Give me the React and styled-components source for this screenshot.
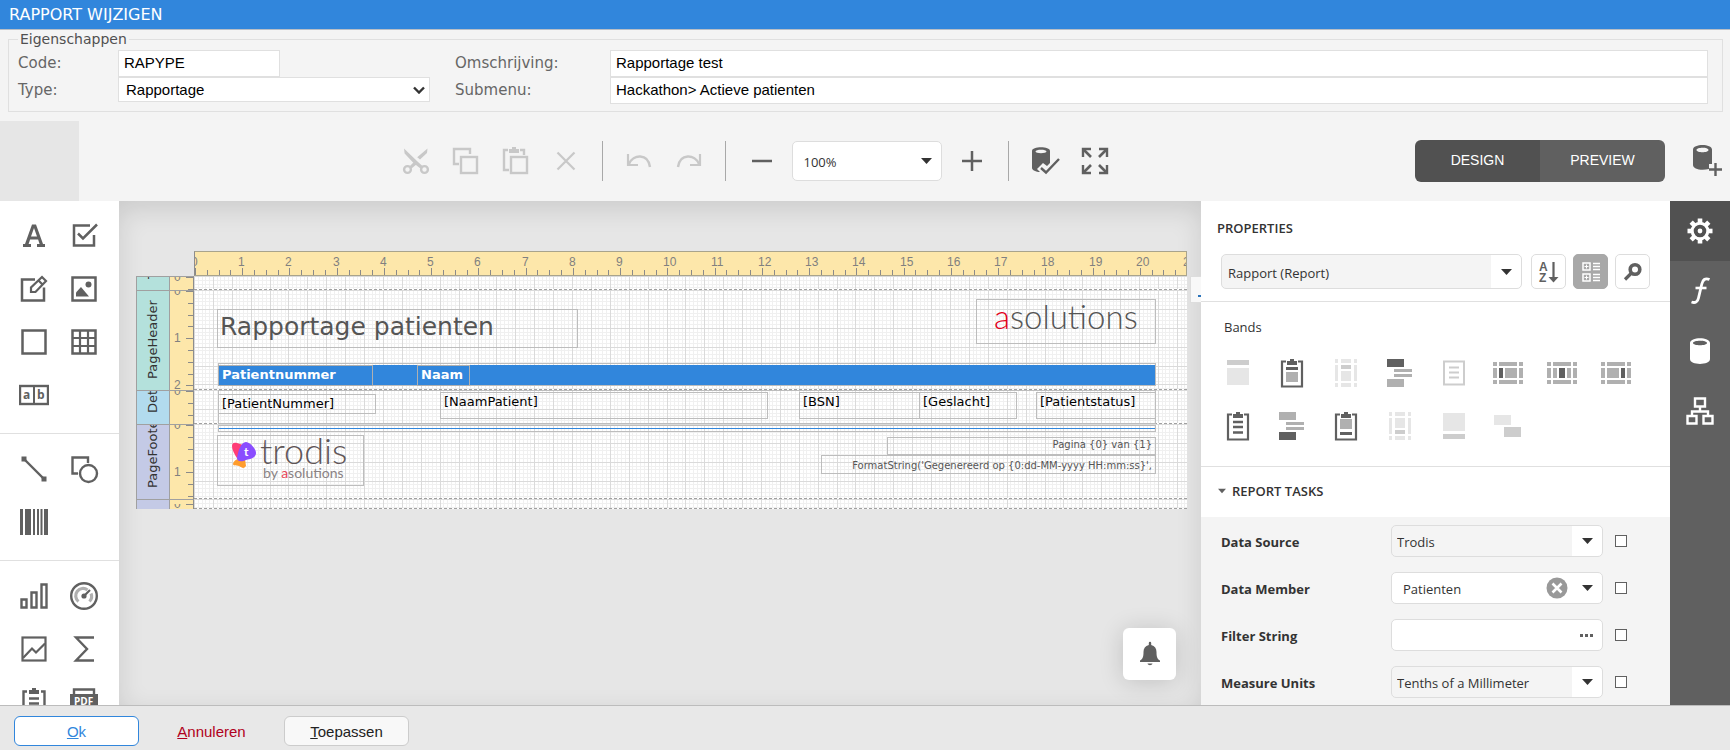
import React from 'react';
import styled, { createGlobalStyle } from 'styled-components';

const CM = 47.24;
const GRID = 18.9;

const UI_FONT = '"Segoe UI", "Open Sans", "Noto Sans", sans-serif';
const VERDANA = 'Verdana, "DejaVu Sans", sans-serif';
const ARIAL = 'Arial, "Liberation Sans", sans-serif';

const DARK = '#606060';
const MID = '#b0b0b0';
const SOFT = '#cdcdcd';
const FAINT = '#e6e6e6';

const GlobalStyle = createGlobalStyle`
  *, *::before, *::after {
    box-sizing: border-box;
  }
  body {
    margin: 0;
    background: #f4f4f4;
    font-family: ${ARIAL};
    color: #333;
  }
  button, input, select {
    margin: 0;
    font: inherit;
    color: inherit;
  }
`;

/* ---------- icons ---------- */

const Svg = ({ w = 30, h = w, children, ...rest }) => (
  <svg width={w} height={h} viewBox={`0 0 ${w} ${h}`} fill="none" aria-hidden="true" {...rest}>
    {children}
  </svg>
);

const Line = ({ d, w = 2, ...rest }) => <path d={d} stroke="currentColor" strokeWidth={w} {...rest} />;
const Fill = ({ d, ...rest }) => <path d={d} fill="currentColor" {...rest} />;

const CaretIcon = () => (
  <Svg w={11} h={6}>
    <Fill d="M0 0h11L5.5 6z" />
  </Svg>
);

const ChevronIcon = () => (
  <Svg w={12} h={8}>
    <Line d="M1 1.5l5 5 5-5" w={2.4} />
  </Svg>
);

const CutIcon = () => (
  <Svg>
    <circle cx="6.5" cy="23.5" r="3.4" stroke="currentColor" strokeWidth="2.4" />
    <circle cx="23.5" cy="23.5" r="3.4" stroke="currentColor" strokeWidth="2.4" />
    <Fill d="M3 2.5L16.5 15.5L22 20.5L19.5 22.5L13 17.5L3.6 7.5Z" />
    <Fill d="M26.5 2.5L26 7L19 13.5L16.2 11.2ZM13.5 15.5L16 18L10.5 22.6L8.4 20.6Z" />
  </Svg>
);

const CopyIcon = () => (
  <Svg>
    <Line d="M19 8V3H3v15h5" w={2.4} />
    <rect x="10" y="11" width="16" height="16" stroke="currentColor" strokeWidth="2.4" />
  </Svg>
);

const PasteIcon = () => (
  <Svg>
    <Line d="M7 4H3v20h5M19 4h4v5" w={2.4} />
    <Fill d="M8 3h3V1h4v2h3v4H8z" />
    <rect x="10" y="11" width="16" height="16" stroke="currentColor" strokeWidth="2.4" />
  </Svg>
);

const DeleteIcon = () => (
  <Svg>
    <Line d="M6.5 6.5l17 17M23.5 6.5l-17 17" w={2.2} />
  </Svg>
);

const UndoIcon = () => (
  <Svg>
    <Line d="M4 8v11h10" w={2.2} />
    <Line d="M5 18C9 8 24 7 26 21" w={2.4} />
  </Svg>
);

const RedoIcon = () => (
  <Svg>
    <Line d="M26 8v11H16" w={2.2} />
    <Line d="M25 18C21 8 6 7 4 21" w={2.4} />
  </Svg>
);

const MinusIcon = () => (
  <Svg>
    <Line d="M5 15h20" w={2.5} />
  </Svg>
);

const PlusIcon = () => (
  <Svg>
    <Line d="M5 15h20M15 5v20" w={2.5} />
  </Svg>
);

const ValidateIcon = () => (
  <Svg>
    <Fill
      fillRule="evenodd"
      d="M2 5c0-5 18-5 18 0v12l-3 3-4-3-6 6 3 3C6 26 2 24 2 22zM5.5 5.5c0 2.3 11 2.3 11 0s-11-2.3-11 0z"
    />
    <Line d="M11 22l5 4.5L29 13" w={2.4} />
  </Svg>
);

const FullscreenIcon = () => (
  <Svg>
    <Line d="M3 11V3h8M19 3h8v8M27 19v8h-8M11 27H3v-8" w={2.4} />
    <Line d="M3 3l8 8M27 3l-8 8M27 27l-8-8M3 27l8-8" w={2.6} />
  </Svg>
);

const DataAddIcon = () => (
  <Svg w={30} h={34}>
    <Fill
      fillRule="evenodd"
      d="M1 5.5c0-6 19-6 19 0V20h-3v5C9 27 1 25 1 21zM4.5 6c0 3 12 3 12 0s-12-3-12 0z"
    />
    <Line d="M17 25.5h13M23.5 19v13" w={2.4} />
  </Svg>
);

const LabelIcon = () => (
  <Svg>
    <Fill
      fillRule="evenodd"
      d="M13 3.5h4L24 23h2v3h-8v-3h2.6l-1.5-4.5h-8L9.6 23H12v3H4v-3h2zM12 15.5h6L15 7z"
    />
  </Svg>
);

const CheckBoxIcon = () => (
  <Svg>
    <Line d="M21 4.5H5v20h20V14" w={2.5} />
    <Line d="M9 12.5l5 5L28 3.5" w={2.5} />
  </Svg>
);

const RichTextIcon = () => (
  <Svg>
    <Line d="M16 5.5H3v21h22v-13" w={2.5} />
    <Line d="M12 18v-4.5L23 3l4 4-10.5 11zM19.5 6.5l4 4" w={2.2} />
  </Svg>
);

const PictureIcon = () => (
  <Svg>
    <rect x="3.5" y="3.5" width="23" height="23" stroke="currentColor" strokeWidth="2.5" />
    <circle cx="19.5" cy="10.5" r="3" fill="currentColor" />
    <Fill d="M7 22.5v-4L12 13l8 9.5z" />
  </Svg>
);

const PanelIcon = () => (
  <Svg>
    <rect x="3.5" y="3.5" width="23" height="23" stroke="currentColor" strokeWidth="2.5" />
  </Svg>
);

const TableIcon = () => (
  <Svg>
    <rect x="3.5" y="3.5" width="23" height="23" stroke="currentColor" strokeWidth="2.5" />
    <Line d="M11 3v24M19 3v24M3 11h24M3 19h24" w={2.2} />
  </Svg>
);

const CombIcon = () => (
  <Svg>
    <rect x="1" y="6" width="28" height="18" stroke="currentColor" strokeWidth="2.4" />
    <Line d="M15 6v18" w={2} />
    <text x="4" y="19" fontSize="12" fontWeight="700" fontFamily="Open Sans" fill="currentColor">a</text>
    <text x="18" y="19" fontSize="12" fontWeight="700" fontFamily="Open Sans" fill="currentColor">b</text>
  </Svg>
);

const LineIcon = () => (
  <Svg>
    <Line d="M5 5l20 20" w={2.4} />
    <Fill d="M2.5 2.5h5v5h-5zM22.5 22.5h5v5h-5z" />
  </Svg>
);

const ShapeIcon = () => (
  <Svg>
    <Line d="M19 9V3.5H3.5v16H9" w={2.4} />
    <circle cx="19.5" cy="19.5" r="8.5" stroke="currentColor" strokeWidth="2.4" />
  </Svg>
);

const BarcodeIcon = () => (
  <Svg>
    <Fill d="M1 2h3v26H1zM6 2h6v26H6zM14 2h2v26h-2zM18 2h2v26h-2zM21.5 2h2v26h-2zM25 2h4v26h-4z" />
  </Svg>
);

const ChartIcon = () => (
  <Svg>
    <Line d="M2.5 18.5h5v8h-5zM12.5 11.5h5v15h-5zM22.5 3.5h5v23h-5z" w={2.4} />
  </Svg>
);

const GaugeIcon = () => (
  <Svg>
    <circle cx="15" cy="15" r="12.8" stroke="currentColor" strokeWidth="2.4" />
    <path d="M9.5 20.5a7.3 7.3 0 0 1 9-11.5M22 12.5a7.3 7.3 0 0 1-1.5 8" stroke={MID} strokeWidth="3.2" />
    <Line d="M15 15l6-6" w={2.2} />
    <circle cx="15" cy="15" r="2.6" fill="currentColor" />
  </Svg>
);

const SparklineIcon = () => (
  <Svg>
    <rect x="3.5" y="3.5" width="23" height="23" stroke="currentColor" strokeWidth="2.2" />
    <Line d="M4 24l9-9.5 4 4 9-9" w={2.2} />
  </Svg>
);

const SigmaIcon = () => (
  <Svg>
    <Line d="M25 3.5H7l11 11.5L7 26.5h18" w={2.4} />
  </Svg>
);

const ContentsIcon = () => (
  <Svg>
    <Line d="M8 4.5H4.5v23h21v-23H22M10 11.5h10M10 16.5h10M10 21.5h10" w={2.4} />
    <Fill d="M10 3h3V1h4v2h3v4H10z" />
  </Svg>
);

const PdfIcon = () => (
  <Svg>
    <Line d="M5 8V2.5h20V8" w={2.4} />
    <Fill d="M1 7h28v16H1z" />
    <text x="5" y="18" fontSize="10" fontWeight="700" fontFamily="Open Sans" fill="#fff">PDF</text>
  </Svg>
);

const SortIcon = () => (
  <Svg w={24}>
    <text x="2" y="11" fontSize="12" fontWeight="700" fontFamily="Liberation Sans" fill="currentColor">A</text>
    <text x="2" y="22" fontSize="12" fontWeight="700" fontFamily="Liberation Sans" fill="currentColor">Z</text>
    <Line d="M16.5 2v17" w={2.2} />
    <Fill d="M11.5 17h10l-5 5.5z" />
  </Svg>
);

const CategoryIcon = () => (
  <Svg w={24}>
    <Line d="M4 3h7v7H4zM4 14h7v7H4zM14 3.5h7M14 6.5h7M14 9.5h7M14 14.5h7M14 17.5h7M14 20.5h7" w={1.5} />
    <Line d="M7.5 4.5v4M5.5 6.5h4M7.5 15.5v4M5.5 17.5h4" w={1} />
  </Svg>
);

const SearchIcon = () => (
  <Svg w={24}>
    <circle cx="14" cy="9.5" r="4.8" stroke="currentColor" strokeWidth="3.6" />
    <Line d="M10.5 13L4 19.5" w={3.2} />
  </Svg>
);

const GearIcon = () => (
  <Svg w={28}>
    {[0, 45, 90, 135, 180, 225, 270, 315].map((a) => (
      <rect key={a} x="11.7" y="1.5" width="4.6" height="5" fill="currentColor" transform={`rotate(${a} 14 14)`} />
    ))}
    <circle cx="14" cy="14" r="7.8" stroke="currentColor" strokeWidth="3" />
    <circle cx="14" cy="14" r="2.4" fill="currentColor" />
  </Svg>
);

const FunctionIcon = () => (
  <Svg w={28}>
    <Line d="M23.5 2.5C19 .5 16.7 3 15.8 7l-3.3 14C11.8 24.5 9.5 26.5 5.5 25" w={2.8} />
    <Line d="M9.5 11h11" w={2.6} />
  </Svg>
);

const DatabaseIcon = () => (
  <Svg w={28}>
    <Fill fillRule="evenodd" d="M4 6c0-6.5 20-6.5 20 0v16c0 6.5-20 6.5-20 0zM7 6c0 3 14 3 14 0s-14-3-14 0z" />
  </Svg>
);

const TreeIcon = () => (
  <Svg w={28}>
    <Line d="M9 1.5h10v8H9zM1.5 19h9v7.5h-9zM17.5 19h9v7.5h-9zM14 10v4M6 19v-4.5h16V19" w={2.4} />
  </Svg>
);

const BellIcon = () => (
  <Svg w={22} h={26}>
    <Fill d="M9.8 4V2a1.2 1.2 0 0 1 2.4 0v2c3.6.8 5.3 3.5 5.3 7 0 5 .8 7 3.5 8.5V21H1v-1.5C3.7 18 4.5 16 4.5 11c0-3.5 1.7-6.2 5.3-7zM8.5 22.5h5c-.5 2.2-4.5 2.2-5 0z" />
  </Svg>
);

const ClearIcon = () => (
  <Svg w={22}>
    <circle cx="11" cy="11" r="10.5" fill="#999" />
    <path d="M6.5 6.5l9 9M15.5 6.5l-9 9" stroke="#fff" strokeWidth="2.6" />
  </Svg>
);

const DotsIcon = () => (
  <Svg w={14} h={4}>
    <Fill d="M0 1h3v3H0zM5 1h3v3H5zM10 1h3v3h-3z" />
  </Svg>
);

const Clipboard = ({ children }) => (
  <Svg>
    <path d="M9 3.5H5v25h20v-25h-4" stroke={DARK} strokeWidth="2.2" />
    <path d="M10 3h3V1h4v2h3v4H10z" fill={DARK} />
    {children}
  </Svg>
);

const Frame = ({ children }) => (
  <Svg>
    <path
      d="M4 1h3v4H4zM10 1h10v4H10zM23 1h3v4h-3zM4 7h3v16H4zM23 7h3v16h-3zM4 25h3v4H4zM10 25h10v4H10zM23 25h3v4h-3z"
      fill={FAINT}
    />
    {children}
  </Svg>
);

const WideFrame = ({ children }) => (
  <Svg>
    <path
      d="M0 4h4v4H0zM6 4h18v4H6zM26 4h4v4h-4zM0 10h4v10H0zM26 10h4v10h-4zM0 22h4v4H0zM6 22h18v4H6zM26 22h4v4h-4z"
      fill={MID}
    />
    {children}
  </Svg>
);

const BAND_ICONS = [
  {
    name: 'Top Margin',
    icon: (
      <Svg>
        <path d="M4 2h22v5H4z" fill={SOFT} />
        <path d="M4 10h22v17H4z" fill={FAINT} />
      </Svg>
    ),
  },
  {
    name: 'Report Header',
    icon: (
      <Clipboard>
        <path d="M9 9h12v3H9z" fill={DARK} />
        <path d="M9 14h12v10H9z" fill={MID} />
      </Clipboard>
    ),
  },
  {
    name: 'Page Header',
    icon: (
      <Frame>
        <path d="M10 7h10v4H10z" fill={SOFT} />
        <path d="M10 13h10v10H10z" fill={FAINT} />
      </Frame>
    ),
  },
  {
    name: 'Group Header',
    icon: (
      <Svg>
        <path d="M2 1h17v8H2z" fill={DARK} />
        <path d="M9 11h18v3H9zM9 16h18v3H9zM2 21h17v8H2z" fill={MID} />
      </Svg>
    ),
  },
  {
    name: 'Detail',
    icon: (
      <Svg>
        <path d="M5 3.5h20v23H5z" stroke={SOFT} strokeWidth="2" />
        <path d="M10 9.5h10M10 14.5h10M10 19.5h10" stroke={SOFT} strokeWidth="2" />
      </Svg>
    ),
  },
  {
    name: 'Vertical Header',
    icon: (
      <WideFrame>
        <path d="M6 10h4v10H6z" fill={DARK} />
        <path d="M12 10h12v10H12z" fill={MID} />
      </WideFrame>
    ),
  },
  {
    name: 'Vertical Detail',
    icon: (
      <WideFrame>
        <path d="M12 10h6v10h-6z" fill={DARK} />
        <path d="M6 10h4v10H6zM20 10h4v10h-4z" fill={MID} />
      </WideFrame>
    ),
  },
  {
    name: 'Vertical Total',
    icon: (
      <WideFrame>
        <path d="M20 10h4v10h-4z" fill={DARK} />
        <path d="M6 10h12v10H6z" fill={MID} />
      </WideFrame>
    ),
  },
  {
    name: 'Detail Report',
    icon: (
      <Clipboard>
        <path d="M10 11h10M10 16h10M10 21.5h10" stroke={DARK} strokeWidth="2.5" />
      </Clipboard>
    ),
  },
  {
    name: 'Group Footer',
    icon: (
      <Svg>
        <path d="M2 1h17v8H2zM9 11h18v3H9zM9 16h18v3H9z" fill={MID} />
        <path d="M2 21h17v8H2z" fill={DARK} />
      </Svg>
    ),
  },
  {
    name: 'Report Footer',
    icon: (
      <Clipboard>
        <path d="M9 8h12v10H9z" fill={MID} />
        <path d="M9 21h12v3H9z" fill={DARK} />
      </Clipboard>
    ),
  },
  {
    name: 'Page Footer',
    icon: (
      <Frame>
        <path d="M10 7h10v10H10z" fill={FAINT} />
        <path d="M10 19h10v4H10z" fill={SOFT} />
      </Frame>
    ),
  },
  {
    name: 'Bottom Margin',
    icon: (
      <Svg>
        <path d="M4 2h22v18H4z" fill={FAINT} />
        <path d="M4 23h22v5H4z" fill={SOFT} />
      </Svg>
    ),
  },
  {
    name: 'Sub-Band',
    icon: (
      <Svg>
        <path d="M1 4h17v10H1z" fill={FAINT} />
        <path d="M11 16h17v10H11z" fill={SOFT} />
      </Svg>
    ),
  },
];

const TOOL_GROUPS = [
  [
    ['Label', LabelIcon],
    ['Check Box', CheckBoxIcon],
    ['Rich Text', RichTextIcon],
    ['Picture Box', PictureIcon],
    ['Panel', PanelIcon],
    ['Table', TableIcon],
    ['Character Comb', CombIcon],
  ],
  [
    ['Line', LineIcon],
    ['Shape', ShapeIcon],
    ['Barcode', BarcodeIcon],
  ],
  [
    ['Chart', ChartIcon],
    ['Gauge', GaugeIcon],
    ['Sparkline', SparklineIcon],
    ['Pivot Grid', SigmaIcon],
    ['Table of Contents', ContentsIcon],
    ['PDF Content', PdfIcon],
  ],
];

/* ---------- page ---------- */

const Page = styled.div`
  display: flex;
  flex-direction: column;
  height: 100vh;
  overflow: hidden;
`;

const TitleBar = styled.h1`
  margin: 0;
  padding: 0 9px;
  border-bottom: 1px solid #b8bec6;
  background: #3186dc;
  color: #fff;
  font: 400 16px/29px ${VERDANA};
`;

const Properties = styled.fieldset`
  display: grid;
  grid-template-columns: 100px 312px 180px 1fr;
  margin: 0 7px 9px 8px;
  padding: 2px 14px 7px 9px;
  border: 1px solid #e0e0e0;
  color: #666;
  font: 15px/26px ${VERDANA};
`;

const Legend = styled.legend`
  padding: 0 2px;
  color: #505050;
  font-size: 14px;
  line-height: 18px;
`;

const FieldLabel = styled.label`
  padding-left: ${(props) => (props.$indent ? '25px' : '0')};
  width: max-content;
`;

const TextField = styled.input`
  width: ${(props) => (props.$short ? '162px' : '100%')};
  height: 27px;
  padding: 0 5px 2px;
  border: 1px solid #e0e0e0;
  background: #fff;
  color: #000;
  font: 15px ${ARIAL};
`;

const SelectWrap = styled.div`
  position: relative;
  display: flex;
  align-items: center;
  height: ${(props) => props.$height || 32}px;
  color: #333;

  > svg {
    position: absolute;
    right: ${(props) => props.$caret || 10}px;
    pointer-events: none;
  }
`;

const TypeSelect = styled.select`
  width: 100%;
  height: 100%;
  padding: 0 7px;
  border: 1px solid #e0e0e0;
  background: #fff;
  color: #000;
  font: 15px ${ARIAL};
  appearance: none;
`;

/* ---------- toolbar ---------- */

const Toolbar = styled.div`
  display: flex;
  align-items: center;
  height: 80px;
  background: #f4f4f4;
`;

const MenuCorner = styled.div`
  width: 79px;
  height: 100%;
  background: #e6e6e6;
`;

const ToolStrip = styled.div`
  flex: 1;
  display: flex;
  align-items: center;
  justify-content: center;
  padding-left: 16px;
`;

const ToolButton = styled.button`
  display: grid;
  place-items: center;
  width: 50px;
  height: 50px;
  padding: 0;
  border: 0;
  background: none;
  color: ${DARK};

  &:disabled {
    color: #c8c8c8;
  }
`;

const Divider = styled.span`
  width: 1px;
  height: 40px;
  margin: 0 11px;
  background: #a8a8a8;
`;

const Modes = styled.div`
  display: flex;
  height: 42px;
  border-radius: 6px;
  overflow: hidden;
  margin-right: 27px;
`;

const ModeButton = styled.button`
  width: 125px;
  padding: 0 0 2px;
  border: 0;
  background: ${(props) => (props.$active ? '#515151' : DARK)};
  color: #fff;
  font: 14px ${ARIAL};
`;

const AddData = styled.button`
  display: grid;
  padding: 0;
  margin-right: 8px;
  border: 0;
  background: none;
  color: ${DARK};
`;

const Combo = styled.select`
  width: 100%;
  height: 100%;
  padding: 2px 30px 0 5px;
  border: 1px solid #ddd;
  border-radius: 5px;
  background: ${(props) =>
    props.$plain
      ? '#fff'
      : 'linear-gradient(#f4f4f4, #f4f4f4) no-repeat left / calc(100% - 30px) 100%, #fff'};
  color: #333;
  font: 13px ${UI_FONT};
  text-indent: ${(props) => props.$indent || 0}px;
  appearance: none;
`;

const ZoomBox = styled(SelectWrap)`
  width: 150px;
  margin: 0 5px;
`;

/* ---------- designer ---------- */

const Designer = styled.div`
  flex: 1;
  display: flex;
  min-height: 0;
`;

const Toolbox = styled.nav`
  width: 119px;
  overflow: hidden;
  background: #fff;
`;

const ToolGroup = styled.div`
  display: grid;
  grid-template-columns: 50px 50px;
  grid-auto-rows: 53px;
  padding: 8px 9px 12px;
  border-bottom: 1px solid #e0e0e0;

  ${ToolButton} {
    height: 53px;
  }
`;

const Surface = styled.main`
  position: relative;
  flex: 1;
  min-width: 0;
  overflow: hidden;
  padding: 50px 14px 0 17px;
  background: #e6e6e6;
  box-shadow: inset 0 8px 26px rgba(0, 0, 0, 0.12);
`;

const RulerRow = styled.div`
  margin-left: 58px;
  height: 25px;
  border: 1px solid #a9a48c;
  border-left-color: #8d8d8d;
  background: #fde7aa;
`;

const BandRow = styled.section`
  display: grid;
  grid-template-columns: 33px 25px 1fr;
  grid-template-rows: 100%;
  height: ${(props) => props.$height}px;
`;

const BandLabel = styled.div`
  min-height: 0;
  overflow: hidden;
  border-right: 1px solid #a0a0a0;
  border-bottom: 1px solid #a0a0a0;
  background: ${(props) => props.$color};
  color: #333;
  font: 13px/32px ${VERDANA};
  text-indent: 11px;
  writing-mode: vertical-rl;
  transform: rotate(180deg);
  white-space: nowrap;
`;

const BandRuler = styled.div`
  min-height: 0;
  border-top: 1px solid #a0a0a0;
  border-left: 1px solid #a0a0a0;
  border-right: 1px solid #8d8d8d;
  background: #fde7aa;
  overflow: hidden;
`;

const BandArea = styled.div`
  position: relative;
  min-height: 0;
  background: #fff;
  border-bottom: 1px dashed #a0a0a0;
`;

const GridSvg = styled.svg`
  display: block;
  width: 100%;
  height: 100%;
  shape-rendering: crispEdges;
`;

const ReportItem = styled.div`
  position: absolute;
  left: ${(props) => props.$x}px;
  top: ${(props) => props.$y}px;
  width: ${(props) => props.$w}px;
  height: ${(props) => props.$h}px;
  padding: 0 3px;
  border: 1px solid #bdbdbd;
  color: #000;
  font: 13px/18px ${VERDANA};
  white-space: nowrap;
`;

const ReportTitle = styled(ReportItem)`
  padding: 0 2px;
  color: #555;
  font-size: 25px;
  line-height: 34px;
`;

const HeaderBar = styled(ReportItem)`
  padding: 0;
  background: linear-gradient(#3186dc, #3186dc) no-repeat 0 1px;
`;

const HeaderCell = styled(ReportItem)`
  border-color: #b0b0b0;
  background: #3186dc;
  color: #fff;
  font-weight: 700;
`;

const SmallText = styled(ReportItem)`
  color: #555;
  font-size: 10px;
  line-height: ${(props) => props.$lh || 14}px;
  text-align: right;
`;

const LineItem = styled(ReportItem)`
  display: flex;
  align-items: center;
  padding: 0;

  &::before {
    content: '';
    flex: 1;
    height: 1px;
    background: #3186dc;
  }
`;

const SmartTag = styled.button`
  position: absolute;
  right: -6px;
  top: 75px;
  width: 17px;
  height: 27px;
  padding: 0 0 5px 7px;
  border: 1px solid #ddd;
  background: #f8f8f8;
  color: #2a73bb;
  display: flex;
  align-items: flex-end;
`;

const BellButton = styled.button`
  position: absolute;
  right: 25px;
  bottom: 25px;
  display: grid;
  place-items: center;
  width: 53px;
  height: 52px;
  padding: 0;
  border: 0;
  border-radius: 6px;
  background: #fff;
  color: ${DARK};
  box-shadow: 0 2px 24px rgba(0, 0, 0, 0.16);
`;

/* ---------- right side ---------- */

const Side = styled.aside`
  width: 469px;
  overflow: hidden;
  background: #fff;
`;

const SideTitle = styled.h2`
  margin: 0;
  padding: 15px 16px 14px;
  color: #333;
  font: 600 13px/24px ${UI_FONT};
`;

const Picker = styled.div`
  display: flex;
  gap: 7px;
  padding: 0 20px 12px;
  border-bottom: 1px solid #e0e0e0;

  ${SelectWrap} {
    width: 301px;
    margin-right: 2px;
  }
`;

const SquareButton = styled.button`
  display: grid;
  place-items: center;
  width: 35px;
  height: 35px;
  padding: 0;
  border: 1px solid ${(props) => (props.$active ? '#a8a8a8' : '#ddd')};
  border-radius: 5px;
  background: ${(props) => (props.$active ? '#a8a8a8' : '#fff')};
  color: ${(props) => (props.$active ? '#fff' : DARK)};
`;

const Bands = styled.div`
  padding: 13px 0 14px 10px;
  border-bottom: 1px solid #e0e0e0;
`;

const BandsTitle = styled.div`
  padding: 0 13px 7px;
  font: 13px/24px ${UI_FONT};
`;

const BandGrid = styled.div`
  display: grid;
  grid-template-columns: repeat(8, 54px);
`;

const BandButton = styled.button`
  display: grid;
  place-items: center;
  height: 53px;
  padding: 0;
  border: 0;
  background: none;
`;

const SectionToggle = styled.button`
  display: flex;
  align-items: center;
  gap: 6px;
  width: 100%;
  height: 50px;
  padding: 0 17px 2px;
  border: 0;
  background: none;
  color: #333;
  font: 600 13px ${UI_FONT};

  svg {
    width: 8px;
    color: ${DARK};
  }
`;

const Tasks = styled.div`
  padding-top: 8px;
  background: #f4f4f4;
`;

const TaskRow = styled.div`
  display: grid;
  grid-template-columns: 170px 212px 1fr;
  align-items: start;
  height: 47px;
  padding-left: 20px;
`;

const TaskLabel = styled.label`
  font: 700 13px/34px ${UI_FONT};
`;

const Marker = styled.input`
  width: 12px;
  height: 12px;
  margin: 10px 0 0 12px;
  border: 1px solid ${DARK};
  background: #fff;
  appearance: none;
`;

const InnerButton = styled.button`
  position: absolute;
  right: ${(props) => props.$right}px;
  display: grid;
  padding: 0;
  border: 0;
  background: none;
  color: ${DARK};
`;

const FilterField = styled.input`
  width: 100%;
  height: 100%;
  padding: 0 30px 0 5px;
  border: 1px solid #ddd;
  border-radius: 5px;
  background: #fff;
  font: 13px ${UI_FONT};
`;

const Tabs = styled.div`
  display: flex;
  flex-direction: column;
  width: 60px;
  background: ${DARK};
`;

const Tab = styled.button`
  display: grid;
  place-items: center;
  height: 60px;
  padding: 0;
  border: 0;
  background: ${(props) => (props.$active ? '#515151' : 'transparent')};
  color: #fff;
`;

/* ---------- footer ---------- */

const Footer = styled.footer`
  display: flex;
  gap: 10px;
  height: 45px;
  padding: 10px 14px 0;
  border-top: 1px solid #bcbcbc;
  background: #e8e8e8;
`;

const FooterButton = styled.button`
  width: 125px;
  height: 30px;
  padding: 0;
  border: 1px solid transparent;
  border-radius: 6px;
  background: transparent;
  color: #b00020;
  font: 15px ${ARIAL};
`;

const PrimaryButton = styled(FooterButton)`
  border-color: #3186dc;
  background: #fff;
  color: #3186dc;
`;

const PlainButton = styled(FooterButton)`
  border-color: #ccc;
  background: #f8f8f8;
  color: #222;
`;

/* ---------- parts ---------- */

const ticks = (length) => Array.from({ length: Math.ceil(length / (CM / 4)) }, (_, i) => i);

const HorizontalRuler = () => (
  <svg width="100%" height="23" fill="none">
    {ticks(2400).map((i) => {
      const x = Math.round((i * CM) / 4);
      const major = i % 4 === 0;
      return (
        <g key={i}>
          <path d={`M${x + 0.5} ${major ? 16 : 18}V23`} stroke="#8a8a8a" />
          {major && (
            <text x={x - 4} y="14" fontSize="12" fontFamily={ARIAL} fill="#808080">
              {i / 4}
            </text>
          )}
        </g>
      );
    })}
  </svg>
);

const VerticalRuler = ({ height }) => (
  <svg width="23" height={height} fill="none">
    {ticks(height).map((i) => {
      const y = Math.round((i * CM) / 4);
      const major = i % 4 === 0;
      return (
        <g key={i}>
          <path d={`M${major ? 16 : 18} ${y + 0.5}H23`} stroke="#8a8a8a" />
          {major && (
            <text x="4" y={y + 4} fontSize="12" fontFamily={ARIAL} fill="#808080">
              {i / 4}
            </text>
          )}
        </g>
      );
    })}
  </svg>
);

const gridPath = (major) => {
  let d = '';
  for (let i = 0; i * (GRID / 5) < 2400; i++) {
    if ((i % 5 === 0) !== major) continue;
    const p = Math.round((i * GRID) / 5) + 0.5;
    d += `M${p} 0V120`;
    if (p < 120) d += `M0 ${p}H2400`;
  }
  return d;
};

const MINOR_GRID = gridPath(false);
const MAJOR_GRID = gridPath(true);

const Band = ({ name, color, height, children }) => (
  <BandRow $height={height}>
    <BandLabel $color={color}>{name}</BandLabel>
    <BandRuler>
      <VerticalRuler height={height} />
    </BandRuler>
    <BandArea>
      <GridSvg>
        <path d={MINOR_GRID} stroke="#f0f0f0" />
        <path d={MAJOR_GRID} stroke="#dadada" />
      </GridSvg>
      {children}
    </BandArea>
  </BandRow>
);

const AsolutionsLogo = () => (
  <svg width="172" height="40" fontFamily="Lato" fontWeight="300" fontSize="33">
    <text x="14" y="29" fill="#555">
      <tspan fill="#e2001a">a</tspan>solutions
    </text>
  </svg>
);

const TrodisLogo = () => (
  <svg width="138" height="48" fontFamily="Lato">
    <path d="M11 10c0-3 2-4 5-3l12 4-6 16c-5-1-11-12-11-17z" fill="#ff3d77" />
    <path d="M12 28c1-5 6-6 12-5l1 7c-2 3-4 2-7 0-3-1-6 0-6-2z" fill="#ff9d2e" />
    <path d="M16 22C17 15 20 6 25 6c5 1 10 7 10 11 0 5-6 6-10 7-4 2-9 2-9-2z" fill="#8a4dff" />
    <text x="23" y="20" fontSize="12" fontWeight="700" fill="#fff">t</text>
    <text x="39" y="28" fontSize="36" fontWeight="300" fill="#5f5658">trodis</text>
    <text x="42" y="42" fontSize="14" fontWeight="400" fill="#8a8284">
      by <tspan fill="#e8485a">a</tspan>solutions
    </text>
  </svg>
);

const Select = ({ id, label, value, height, children, ...rest }) => (
  <SelectWrap $height={height}>
    <Combo id={id} aria-label={label} {...rest}>
      <option>{value}</option>
    </Combo>
    {children}
    <CaretIcon />
  </SelectWrap>
);

const Task = ({ id, label, children }) => (
  <TaskRow>
    <TaskLabel htmlFor={id}>{label}</TaskLabel>
    {children}
    <Marker type="checkbox" aria-label={label} />
  </TaskRow>
);

const ReportCanvas = () => (
  <Surface>
    <RulerRow>
      <HorizontalRuler />
    </RulerRow>
    <Band name="TopMargin" color="#b4e1dc" height={14} />
    <Band name="PageHeader" color="#b4e1dc" height={100}>
      <ReportTitle $x={23} $y={19} $w={361} $h={39}>Rapportage patienten</ReportTitle>
      <ReportItem $x={782} $y={9} $w={180} $h={45}>
        <AsolutionsLogo />
      </ReportItem>
      <HeaderBar $x={24} $y={73} $w={938} $h={23} />
      <HeaderCell $x={24} $y={75} $w={155} $h={21}>Patientnummer</HeaderCell>
      <HeaderCell $x={223} $y={75} $w={53} $h={21}>Naam</HeaderCell>
    </Band>
    <Band name="Detail" color="#b2dbee" height={34}>
      <ReportItem $x={24} $y={0} $w={938} $h={34} />
      <ReportItem $x={24} $y={4} $w={158} $h={20}>[PatientNummer]</ReportItem>
      <ReportItem $x={246} $y={2} $w={328} $h={27}>[NaamPatient]</ReportItem>
      <ReportItem $x={605} $y={2} $w={121} $h={27}>[BSN]</ReportItem>
      <ReportItem $x={725} $y={2} $w={98} $h={27}>[Geslacht]</ReportItem>
      <ReportItem $x={842} $y={2} $w={120} $h={27}>[Patientstatus]</ReportItem>
    </Band>
    <Band name="PageFooter" color="#c4cae6" height={75}>
      <LineItem $x={24} $y={1} $w={938} $h={7} />
      <ReportItem $x={23} $y={11} $w={147} $h={51}>
        <TrodisLogo />
      </ReportItem>
      <SmallText $x={693} $y={13} $w={269} $h={18}>{'Pagina {0} van {1}'}</SmallText>
      <SmallText $x={627} $y={31} $w={335} $h={19} $lh={19}>
        {"FormatString('Gegenereerd op {0:dd-MM-yyyy HH:mm:ss}',"}
      </SmallText>
    </Band>
    <Band color="#c4cae6" height={10} />
    <SmartTag aria-label="Report tasks">
      <Svg w={8} h={6}>
        <Fill d="M0 4h8v2H0zM4 0h4v2H4z" />
      </Svg>
    </SmartTag>
    <BellButton aria-label="Notifications">
      <BellIcon />
    </BellButton>
  </Surface>
);

const PropertiesPanel = () => (
  <Side>
    <SideTitle>PROPERTIES</SideTitle>
    <Picker>
      <Select label="Element" value="Rapport (Report)" height={35} $indent={1} />
      <SquareButton aria-label="Sort"><SortIcon /></SquareButton>
      <SquareButton aria-label="Categories" $active><CategoryIcon /></SquareButton>
      <SquareButton aria-label="Search"><SearchIcon /></SquareButton>
    </Picker>
    <Bands>
      <BandsTitle>Bands</BandsTitle>
      <BandGrid>
        {BAND_ICONS.map(({ name, icon }) => (
          <BandButton key={name} aria-label={name}>{icon}</BandButton>
        ))}
      </BandGrid>
    </Bands>
    <SectionToggle>
      <CaretIcon />
      REPORT TASKS
    </SectionToggle>
    <Tasks>
      <Task id="source" label="Data Source">
        <Select id="source" value="Trodis" />
      </Task>
      <Task id="member" label="Data Member">
        <Select id="member" value="Patienten" $plain $indent={6}>
          <InnerButton $right={35} aria-label="Clear"><ClearIcon /></InnerButton>
        </Select>
      </Task>
      <Task id="filter" label="Filter String">
        <SelectWrap>
          <FilterField id="filter" />
          <InnerButton $right={9} aria-label="Edit filter"><DotsIcon /></InnerButton>
        </SelectWrap>
      </Task>
      <Task id="units" label="Measure Units">
        <Select id="units" value="Tenths of a Millimeter" />
      </Task>
    </Tasks>
  </Side>
);

const App = () => (
  <Page>
    <GlobalStyle />
    <TitleBar>RAPPORT WIJZIGEN</TitleBar>
    <Properties>
      <Legend>Eigenschappen</Legend>
      <FieldLabel htmlFor="code">Code:</FieldLabel>
      <TextField id="code" $short defaultValue="RAPYPE" />
      <FieldLabel htmlFor="description" $indent>Omschrijving:</FieldLabel>
      <TextField id="description" defaultValue="Rapportage test" />
      <FieldLabel htmlFor="type">Type:</FieldLabel>
      <SelectWrap $height={25} $caret={5}>
        <TypeSelect id="type">
          <option>Rapportage</option>
        </TypeSelect>
        <ChevronIcon />
      </SelectWrap>
      <FieldLabel htmlFor="submenu" $indent>Submenu:</FieldLabel>
      <TextField id="submenu" defaultValue="Hackathon> Actieve patienten" />
    </Properties>

    <Toolbar>
      <MenuCorner />
      <ToolStrip>
        <ToolButton disabled aria-label="Cut"><CutIcon /></ToolButton>
        <ToolButton disabled aria-label="Copy"><CopyIcon /></ToolButton>
        <ToolButton disabled aria-label="Paste"><PasteIcon /></ToolButton>
        <ToolButton disabled aria-label="Delete"><DeleteIcon /></ToolButton>
        <Divider />
        <ToolButton disabled aria-label="Undo"><UndoIcon /></ToolButton>
        <ToolButton disabled aria-label="Redo"><RedoIcon /></ToolButton>
        <Divider />
        <ToolButton aria-label="Zoom out"><MinusIcon /></ToolButton>
        <ZoomBox $height={40}>
          <Combo aria-label="Zoom" $plain $indent={6} defaultValue="100%">
            <option>100%</option>
          </Combo>
          <CaretIcon />
        </ZoomBox>
        <ToolButton aria-label="Zoom in"><PlusIcon /></ToolButton>
        <Divider />
        <ToolButton aria-label="Validate bindings"><ValidateIcon /></ToolButton>
        <ToolButton aria-label="Full screen"><FullscreenIcon /></ToolButton>
      </ToolStrip>
      <Modes>
        <ModeButton $active>DESIGN</ModeButton>
        <ModeButton>PREVIEW</ModeButton>
      </Modes>
      <AddData aria-label="Add data source"><DataAddIcon /></AddData>
    </Toolbar>

    <Designer>
      <Toolbox>
        {TOOL_GROUPS.map((group) => (
          <ToolGroup key={group[0][0]}>
            {group.map(([name, Icon]) => (
              <ToolButton key={name} aria-label={name}>
                <Icon />
              </ToolButton>
            ))}
          </ToolGroup>
        ))}
      </Toolbox>
      <ReportCanvas />
      <PropertiesPanel />
      <Tabs>
        <Tab $active aria-label="Properties"><GearIcon /></Tab>
        <Tab aria-label="Expressions"><FunctionIcon /></Tab>
        <Tab aria-label="Field list"><DatabaseIcon /></Tab>
        <Tab aria-label="Report explorer"><TreeIcon /></Tab>
      </Tabs>
    </Designer>

    <Footer>
      <PrimaryButton><u>O</u>k</PrimaryButton>
      <FooterButton><u>A</u>nnuleren</FooterButton>
      <PlainButton><u>T</u>oepassen</PlainButton>
    </Footer>
  </Page>
);

export default App;
